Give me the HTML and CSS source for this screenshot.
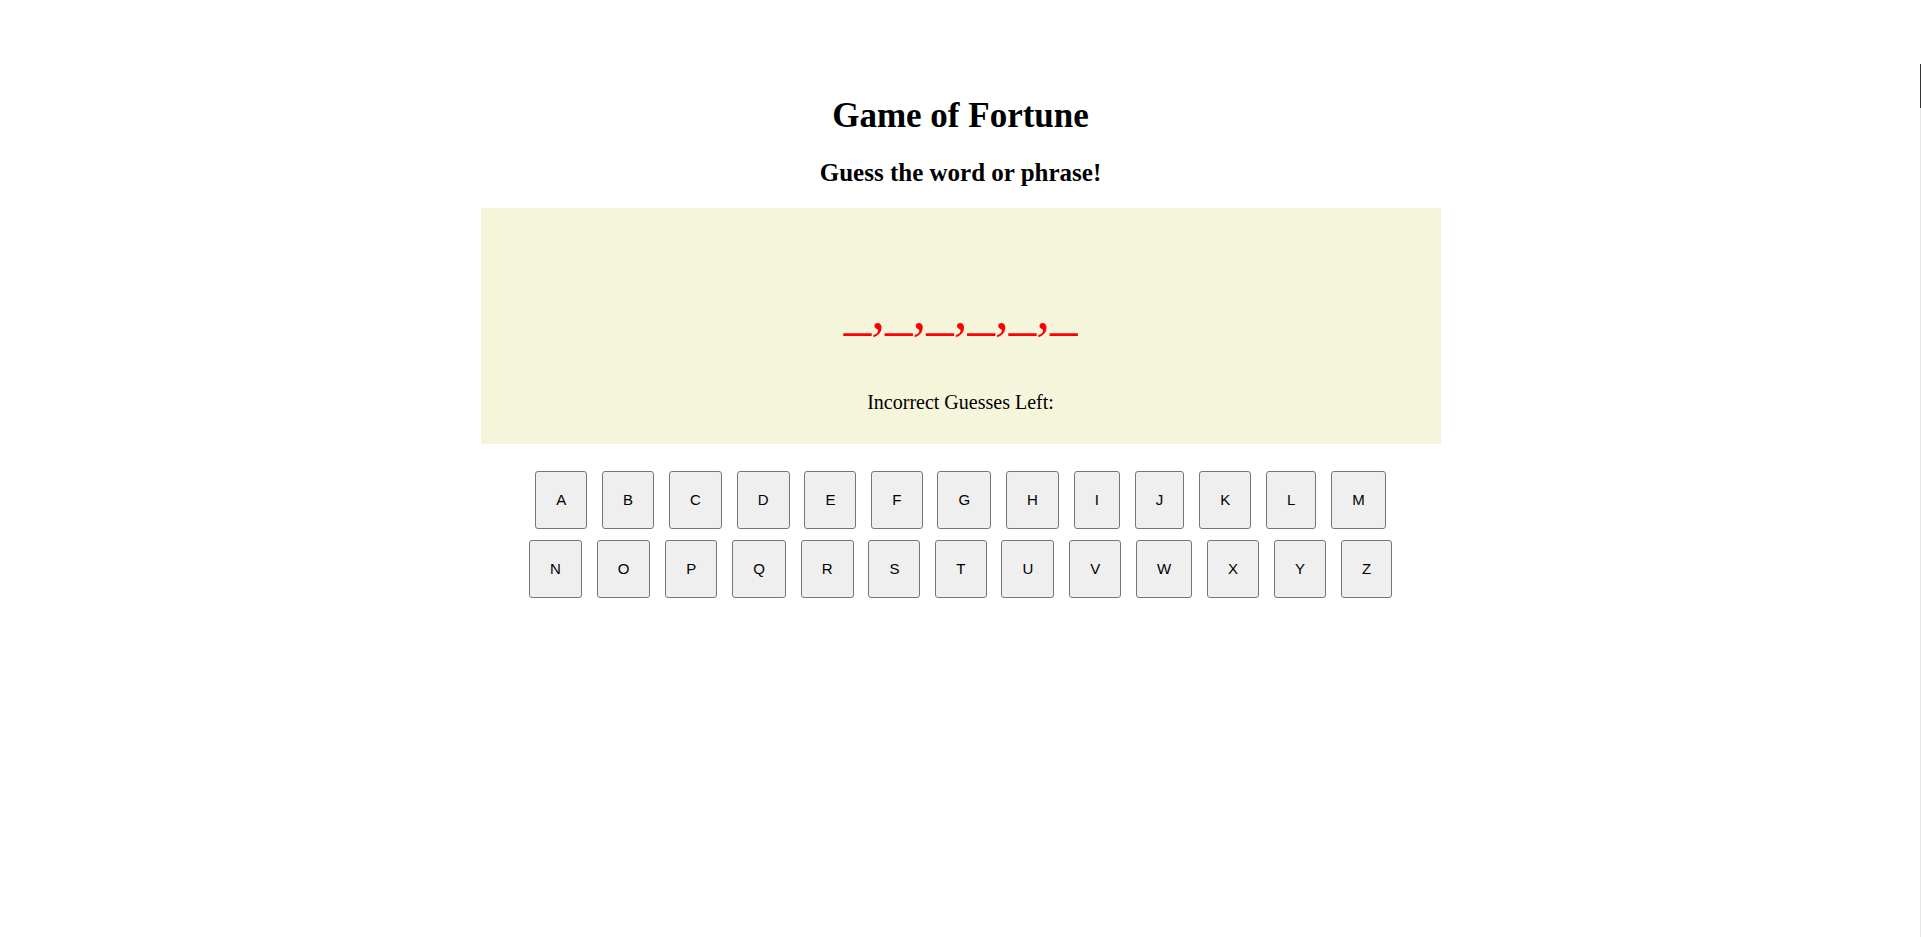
FILE: index.html
```html
<!DOCTYPE html>
<html lang="en">
<head>
<meta charset="utf-8">
<title>Game of Fortune</title>
<link rel="stylesheet" href="styles.css">
</head>
<body>
<div class="page">
  <h1 class="title">Game of Fortune</h1>
  <h2 class="subtitle">Guess the word or phrase!</h2>
  <div class="board">
    <div class="phrase">_,_,_,_,_,_</div>
    <p class="guesses">Incorrect Guesses Left:</p>
  </div>
  <div class="keys">
    <div class="key-row">
      <button class="key">A</button>
      <button class="key">B</button>
      <button class="key">C</button>
      <button class="key">D</button>
      <button class="key">E</button>
      <button class="key">F</button>
      <button class="key">G</button>
      <button class="key">H</button>
      <button class="key">I</button>
      <button class="key">J</button>
      <button class="key">K</button>
      <button class="key">L</button>
      <button class="key">M</button>
    </div>
    <div class="key-row">
      <button class="key">N</button>
      <button class="key">O</button>
      <button class="key">P</button>
      <button class="key">Q</button>
      <button class="key">R</button>
      <button class="key">S</button>
      <button class="key">T</button>
      <button class="key">U</button>
      <button class="key">V</button>
      <button class="key">W</button>
      <button class="key">X</button>
      <button class="key">Y</button>
      <button class="key">Z</button>
    </div>
  </div>
</div>
<div class="edge-bar"><div class="edge-thumb"></div></div>
</body>
</html>
```

FILE: styles.css
```css
html, body {
  margin: 0;
  padding: 0;
  background: #ffffff;
}

body {
  font-family: "Liberation Serif", "Times New Roman", serif;
  color: #000000;
}

.page {
  padding-top: 96px;
  text-align: center;
}

.title {
  font-size: 35px;
  font-weight: bold;
  margin: 0 0 23px;
}

.subtitle {
  font-size: 25px;
  font-weight: bold;
  margin: 0 0 21px;
}

.board {
  width: 960px;
  margin: 0 auto;
  background: #f5f5dc;
  padding: 71px 0 30px;
  display: flex;
  flex-direction: column;
  align-items: center;
}

.phrase {
  font-size: 55px;
  font-weight: normal;
  color: #ff0000;
  margin: 0 0 49px;
}

.guesses {
  font-size: 20px;
  margin: 0;
}

.keys {
  margin-top: 27px;
  display: flex;
  flex-direction: column;
  align-items: center;
  gap: 11px;
}

.key-row {
  display: flex;
  justify-content: center;
  gap: 14.9px;
}

.key {
  font-family: "Liberation Sans", Arial, sans-serif;
  font-size: 15px;
  line-height: 16px;
  color: #000000;
  background: #efefef;
  border: 1px solid #767676;
  border-radius: 3px;
  padding: 20px;
  margin: 0;
}

.edge-bar {
  position: fixed;
  right: 0;
  top: 64px;
  bottom: 0;
  width: 1px;
  background: #e6e6e6;
}

.edge-thumb {
  height: 44px;
  background: #333333;
}
```
